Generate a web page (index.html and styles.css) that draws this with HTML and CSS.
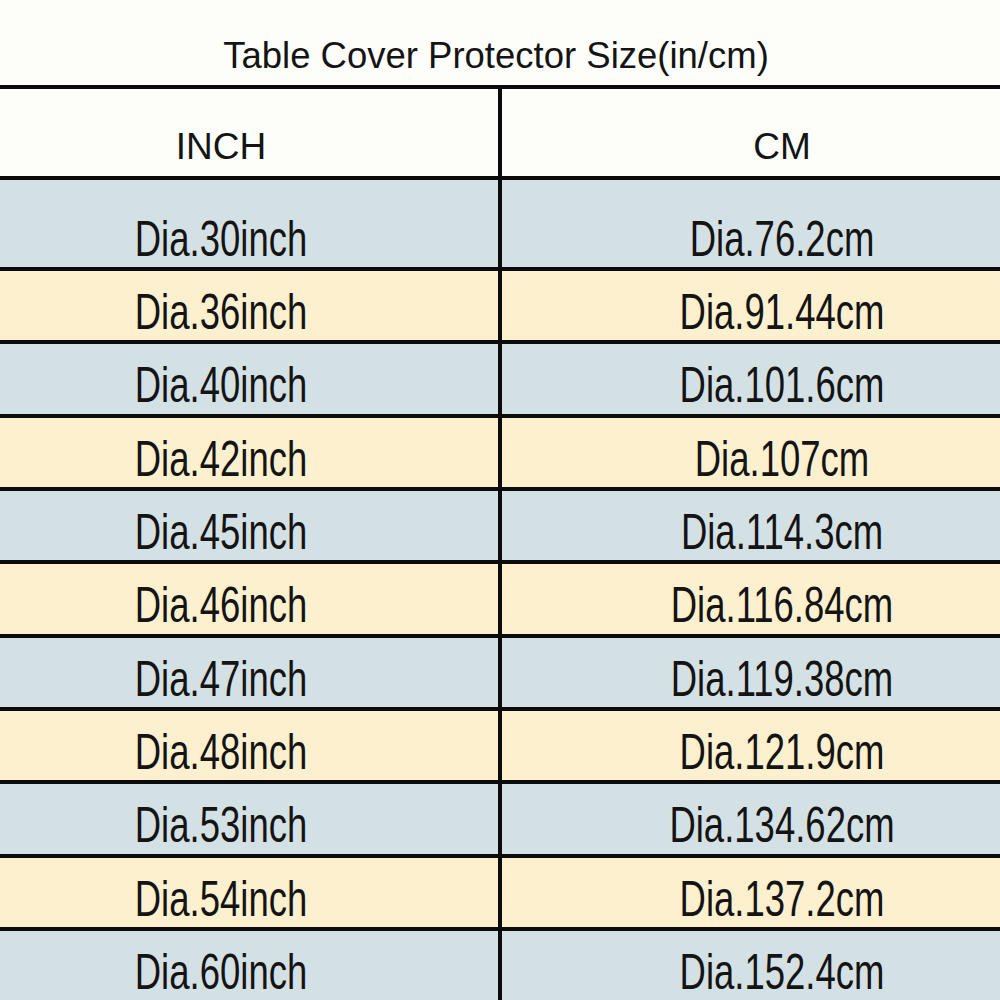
FILE: index.html
```html
<!DOCTYPE html>
<html>
<head>
<meta charset="utf-8">
<link rel="stylesheet" href="styles.css">
</head>
<body>
<div class="page">
  <div class="title">Table Cover Protector Size(in/cm)</div>
  <div class="clip">
    <div class="grid">
      <div class="cell head"><span>INCH</span></div>
      <div class="cell head"><span>CM</span></div>

      <div class="cell blue first"><span class="tall">Dia.30inch</span></div>
      <div class="cell blue first"><span class="tall">Dia.76.2cm</span></div>

      <div class="cell yellow"><span class="tall">Dia.36inch</span></div>
      <div class="cell yellow"><span class="tall">Dia.91.44cm</span></div>

      <div class="cell blue"><span class="tall">Dia.40inch</span></div>
      <div class="cell blue"><span class="tall">Dia.101.6cm</span></div>

      <div class="cell yellow"><span class="tall">Dia.42inch</span></div>
      <div class="cell yellow"><span class="tall">Dia.107cm</span></div>

      <div class="cell blue"><span class="tall">Dia.45inch</span></div>
      <div class="cell blue"><span class="tall">Dia.114.3cm</span></div>

      <div class="cell yellow"><span class="tall">Dia.46inch</span></div>
      <div class="cell yellow"><span class="tall">Dia.116.84cm</span></div>

      <div class="cell blue"><span class="tall">Dia.47inch</span></div>
      <div class="cell blue"><span class="tall">Dia.119.38cm</span></div>

      <div class="cell yellow"><span class="tall">Dia.48inch</span></div>
      <div class="cell yellow"><span class="tall">Dia.121.9cm</span></div>

      <div class="cell blue"><span class="tall">Dia.53inch</span></div>
      <div class="cell blue"><span class="tall">Dia.134.62cm</span></div>

      <div class="cell yellow"><span class="tall">Dia.54inch</span></div>
      <div class="cell yellow"><span class="tall">Dia.137.2cm</span></div>

      <div class="cell blue"><span class="tall">Dia.60inch</span></div>
      <div class="cell blue"><span class="tall">Dia.152.4cm</span></div>
    </div>
  </div>
</div>
</body>
</html>
```
FILE: styles.css
```css
html, body {
  margin: 0;
  padding: 0;
  background: #fdfdf9;
}
body {
  font-family: "Liberation Sans", Arial, sans-serif;
  color: #141414;
  width: 1000px;
  height: 1000px;
  overflow: hidden;
}
.page {
  width: 1000px;
  height: 1000px;
  display: flex;
  flex-direction: column;
}
.title {
  height: 85px;
  display: flex;
  align-items: center;
  justify-content: center;
  padding-right: 8px;
  padding-top: 28px;
  box-sizing: border-box;
  font-size: 36.5px;
  line-height: 1;
}
.clip {
  width: 1000px;
  overflow: hidden;
  flex: 1;
}
.grid {
  margin-left: -56px;
  width: 1118px;
  display: grid;
  grid-template-columns: 554px 560px;
  grid-template-rows: 87px 87px repeat(10, 69.33px);
  column-gap: 4px;
  row-gap: 4px;
  padding-top: 4px;
  background: #0b0b0b;
}
.cell {
  display: flex;
  align-items: center;
  justify-content: center;
  box-sizing: border-box;
  padding-top: 15px;
  line-height: 1;
  font-size: 36.5px;
}
.head {
  background: #fdfdf9;
  padding-top: 27px;
  font-size: 37px;
}
.first {
  padding-top: 33px;
}
.blue {
  background: #d4e1e4;
}
.yellow {
  background: #fdf0cf;
}
.tall {
  display: inline-block;
  transform: scaleY(1.35);
}
```
